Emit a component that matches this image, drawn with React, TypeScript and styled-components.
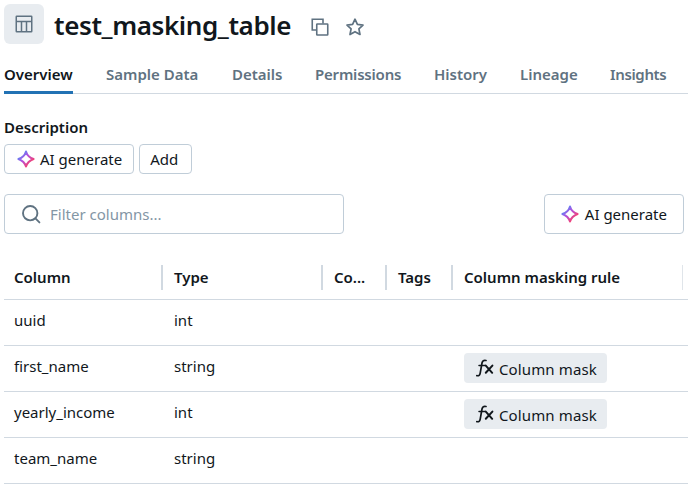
import React from 'react';
import styled, { createGlobalStyle } from 'styled-components';

const Global = createGlobalStyle`
  html, body { margin: 0; padding: 0; background: #fff; }
  body { font-family: "Noto Sans", "Open Sans", sans-serif; color: #11171c; overflow: hidden; }
  * { box-sizing: border-box; }
`;

const Page = styled.div`
  width: 688px;
  height: 487px;
  padding: 4px 0 0 4px;
  overflow: hidden;
`;
const Header = styled.div`
  display: flex;
  align-items: center;
  height: 40px;
`;
const IconBox = styled.div`
  width: 40px;
  height: 40px;
  border-radius: 6px;
  background: #e8ecf0;
  color: #5f7281;
  display: flex;
  align-items: center;
  justify-content: center;
  margin-right: 10px;
`;
const Title = styled.h1`
  margin: 0 20px 0 0;
  padding-top: 2px;
  font-size: 26px;
  font-weight: 600;
  line-height: 40px;
  letter-spacing: -0.4px;
`;
const HeaderIcon = styled.span`
  display: flex;
  color: #5f7281;
  margin: 5px 16px 0 0;
`;
const Tabs = styled.div`
  display: flex;
  gap: 33px;
  height: 50px;
  padding-top: 20px;
  border-bottom: 1px solid #d1d9e1;
`;
const Tab = styled.div<{ $active?: boolean; $w: number; $tight?: number }>`
  flex: 0 0 ${p => p.$w}px;
  min-width: 0;
  font-size: 15px;
  line-height: 20px;
  height: 30px;
  font-weight: 600;
  white-space: nowrap;
  letter-spacing: ${p => p.$tight ?? 0}px;
  color: ${p => (p.$active ? '#11171c' : '#5f7281')};
  border-bottom: ${p => (p.$active ? '3px solid #2272b4' : '3px solid transparent')};
`;
const DescLabel = styled.div`
  margin-top: 23px;
  font-size: 15px;
  line-height: 20px;
  font-weight: 600;
`;
const ButtonRow = styled.div`
  display: flex;
  gap: 5px;
  margin-top: 7px;
`;
const Button = styled.button<{ $large?: boolean; $plain?: boolean }>`
  display: inline-flex;
  align-items: center;
  gap: ${p => (p.$large ? '6px' : '5px')};
  height: ${p => (p.$large ? '40px' : '30px')};
  padding: 0 ${p => (p.$large ? '16px' : p.$plain ? '13px' : '11px')} 0 ${p => (p.$large ? '16px' : p.$plain ? '10px' : '12px')};
  background: #fff;
  border: 1px solid #c0cdd8;
  border-radius: 4px;
  font: 400 15px "Noto Sans", sans-serif;
  color: #11171c;
`;
const FilterRow = styled.div`
  display: flex;
  justify-content: space-between;
  margin-top: 20px;
  padding-right: 4px;
`;
const SearchBox = styled.div`
  width: 340px;
  height: 40px;
  border: 1px solid #c0cdd8;
  border-radius: 4px;
  display: flex;
  align-items: center;
  gap: 9px;
  padding-left: 16px;
  font-size: 15px;
  color: #8396a5;
`;
const Table = styled.div`
  margin-top: 22px;
`;
const HeaderRow = styled.div`
  display: grid;
  grid-template-columns: 159px 160px 64px 66px 230px;
  height: 44px;
  border-bottom: 1px solid #d1d9e1;
  align-items: center;
`;
const Row = styled.div`
  display: grid;
  grid-template-columns: 160px 160px 64px 66px 230px;
  height: 46px;
  border-bottom: 1px solid #d1d9e1;
  font-size: 15px;
  line-height: 20px;
`;
const HeadCell = styled.div<{ $last?: boolean }>`
  height: 25px;
  line-height: 25px;
  padding-left: 10px;
  font-size: 15px;
  font-weight: 600;
  white-space: nowrap;
  border-right: ${p => (p.$last ? '1px solid #e0e5ea' : '2px solid #d1d9e1')};
`;
const TypeHeadCell = styled(HeadCell)`
  padding-left: 11px;
`;
const Cell = styled.div`
  padding: 10px 0 0 10px;
`;
const MaskCell = styled.div`
  padding: 7px 0 0 10px;
  grid-column: 5;
`;
const MaskTag = styled.div`
  display: inline-flex;
  align-items: center;
  gap: 5px;
  height: 30px;
  padding: 0 10px 0 12px;
  border-radius: 4px;
  background: #e8ecf0;
  font-size: 15px;
`;
const MaskText = styled.span`
  letter-spacing: 0.12px;
  padding-top: 2px;
`;

const Sparkle = ({ id }: { id: string }) => (
  <svg width="18" height="18" viewBox="0 0 18 18" fill="none">
    <defs>
      <linearGradient id={id} x1="3" y1="4" x2="14" y2="15" gradientUnits="userSpaceOnUse">
        <stop offset="0" stopColor="#4f8df7" />
        <stop offset="0.4" stopColor="#b150e0" />
        <stop offset="1" stopColor="#ff3f5f" />
      </linearGradient>
    </defs>
    <path
      d="M9 1.4 C10 5 12.6 7.6 16.6 9 C12.6 10.4 10 13 9 16.6 C8 13 5.4 10.4 1.4 9 C5.4 7.6 8 5 9 1.4 Z"
      stroke={`url(#${id})`}
      strokeWidth="2"
      strokeLinejoin="round"
    />
  </svg>
);

const TableIcon = () => (
  <svg width="18" height="18" viewBox="0 0 18 18" fill="none" stroke="currentColor" strokeWidth="1.5">
    <rect x="1.25" y="1.25" width="15.5" height="15.5" rx="0.5" />
    <path d="M1.25 6.5H16.75M6.5 6.5V16.75M11.5 6.5V16.75" />
  </svg>
);

const CopyIcon = () => (
  <svg width="18" height="18" viewBox="0 0 18 18" fill="none" stroke="currentColor" strokeWidth="1.6">
    <path d="M12 5.5V1.25H1.25V12H5.5" />
    <rect x="5.75" y="6" width="11" height="11" rx="0.5" />
  </svg>
);

const StarIcon = () => (
  <svg width="20" height="20" viewBox="0 0 20 20" fill="none" stroke="currentColor" strokeWidth="1.7" strokeLinejoin="round">
    <path d="M10 2.2l2.4 5.2 5.6.7-4.1 3.8 1.1 5.6-5-2.8-5 2.8 1.1-5.6L2 8.1l5.6-.7z" />
  </svg>
);

const SearchIcon = () => (
  <svg width="20" height="20" viewBox="0 0 20 20" fill="none" stroke="#5f7281" strokeWidth="1.9">
    <circle cx="9.2" cy="9.2" r="7.2" />
    <path d="M14.4 14.4l4 4" strokeLinecap="round" />
  </svg>
);

const FxIcon = () => (
  <svg width="18" height="18" viewBox="0 0 18 18" fill="none" stroke="#11171c" strokeLinecap="round">
    <path d="M0.8 16.6c2 .5 3-.4 3.4-2.5L6 4C6.4 1.8 7.8.9 10 1.5" strokeWidth="1.7" />
    <path d="M3 6.6H9" strokeWidth="1.5" />
    <path d="M9.8 6.6l6.4 7.2M16.4 6.6l-6.6 7.2" strokeWidth="2" />
  </svg>
);

const tabs = [
  { label: 'Overview', w: 69, tight: 0 },
  { label: 'Sample Data', w: 93, tight: 0 },
  { label: 'Details', w: 50, tight: 0 },
  { label: 'Permissions', w: 86, tight: -0.2 },
  { label: 'History', w: 53, tight: 0 },
  { label: 'Lineage', w: 57, tight: 0 },
  { label: 'Insights', w: 57, tight: -0.35 },
];

const rows = [
  { name: 'uuid', type: 'int', mask: false },
  { name: 'first_name', type: 'string', mask: true },
  { name: 'yearly_income', type: 'int', mask: true },
  { name: 'team_name', type: 'string', mask: false },
];

export default function App() {
  return (
    <Page>
      <Global />
      <Header>
        <IconBox><TableIcon /></IconBox>
        <Title>test_masking_table</Title>
        <HeaderIcon><CopyIcon /></HeaderIcon>
        <HeaderIcon><StarIcon /></HeaderIcon>
      </Header>
      <Tabs>
        {tabs.map((t, i) => (
          <Tab key={t.label} $active={i === 0} $w={t.w} $tight={t.tight}>{t.label}</Tab>
        ))}
      </Tabs>
      <DescLabel>Description</DescLabel>
      <ButtonRow>
        <Button><Sparkle id="s1" />AI generate</Button>
        <Button $plain>Add</Button>
      </ButtonRow>
      <FilterRow>
        <SearchBox><SearchIcon />Filter columns...</SearchBox>
        <Button $large><Sparkle id="s2" />AI generate</Button>
      </FilterRow>
      <Table>
        <HeaderRow>
          <HeadCell>Column</HeadCell>
          <TypeHeadCell>Type</TypeHeadCell>
          <TypeHeadCell>Co...</TypeHeadCell>
          <TypeHeadCell>Tags</TypeHeadCell>
          <TypeHeadCell $last>Column masking rule</TypeHeadCell>
        </HeaderRow>
        {rows.map(r => (
          <Row key={r.name}>
            <Cell>{r.name}</Cell>
            <Cell>{r.type}</Cell>
            {r.mask && (
              <MaskCell>
                <MaskTag><FxIcon /><MaskText>Column mask</MaskText></MaskTag>
              </MaskCell>
            )}
          </Row>
        ))}
      </Table>
    </Page>
  );
}
